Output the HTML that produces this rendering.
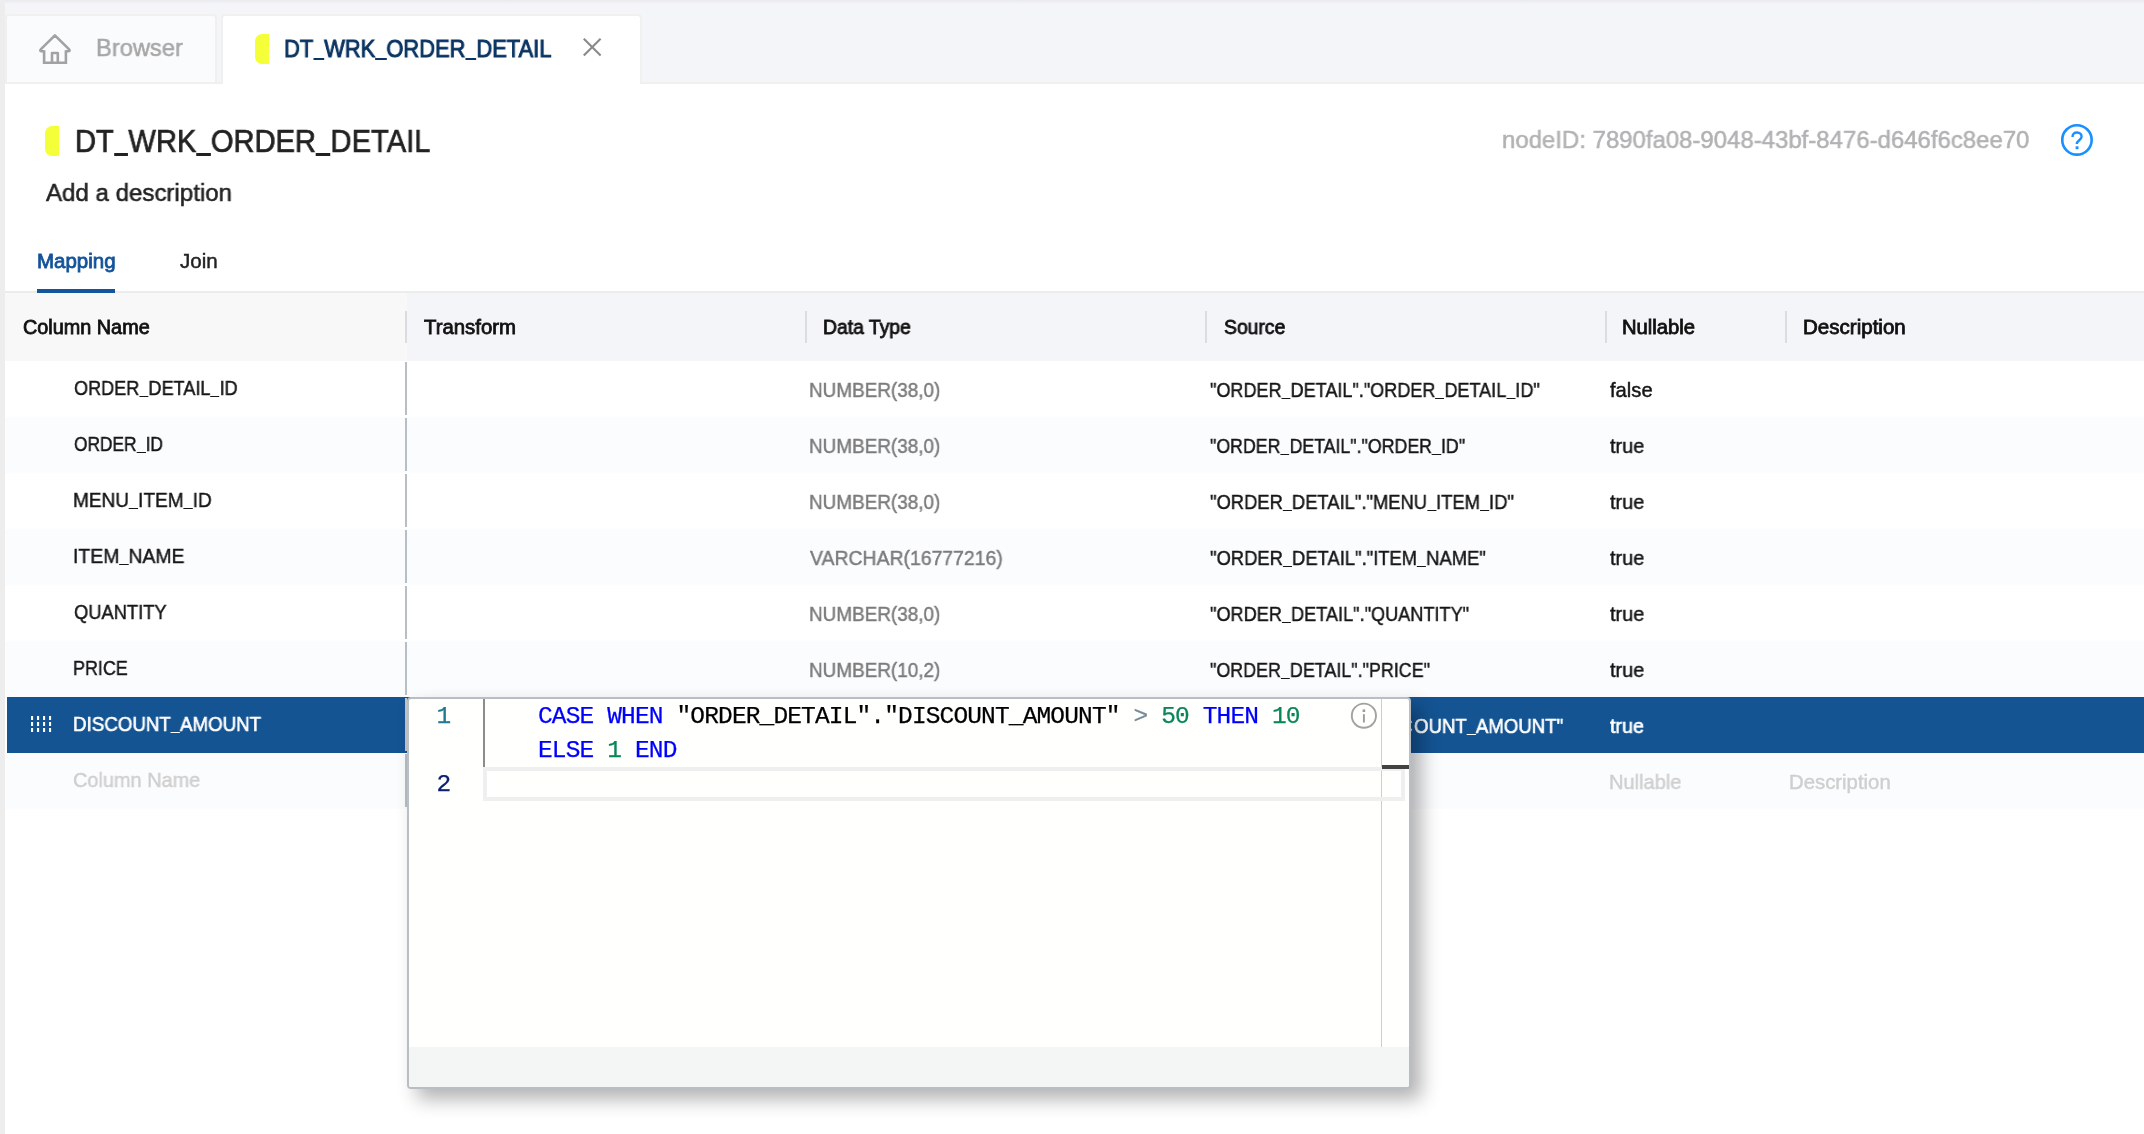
<!DOCTYPE html>
<html lang="en">
<head>
<meta charset="utf-8">
<title>DT_WRK_ORDER_DETAIL</title>
<style>
html,body{margin:0;padding:0;}
body{width:2144px;height:1134px;overflow:hidden;background:#ffffff;position:relative;font-family:"Liberation Sans",sans-serif;}
.a{position:absolute;}
.t{will-change:transform;-webkit-text-stroke:0.022em currentColor;position:absolute;white-space:pre;line-height:40px;height:40px;font-family:"Liberation Sans",sans-serif;transform:scaleX(var(--s));transform-origin:0 0;}
.md{-webkit-text-stroke:0.04em currentColor;}
.wh{-webkit-text-stroke:0.03em currentColor;}
.u{display:inline-block;width:calc(0.45em / var(--s));height:0.085em;line-height:0;overflow:hidden;font-style:normal;-webkit-text-fill-color:transparent;-webkit-text-stroke:0 transparent;background:currentColor;vertical-align:-0.12em;}
.md .u{height:0.11em;vertical-align:-0.135em;}
.m{will-change:transform;position:absolute;white-space:pre;font-family:"Liberation Mono",monospace;}
.sep{position:absolute;width:2px;top:311px;height:32px;background:#dadce1;}
.cb{position:absolute;left:405px;width:2px;height:53px;background:#b7bec5;}
.row{position:absolute;left:5px;width:2139px;height:56px;}
.k{color:#0000ff;}.n{color:#098658;}.o{color:#778899;}.i{color:#000000;}
</style>
</head>
<body>
<!-- chrome backgrounds -->
<div class="a" style="left:0;top:0;width:2144px;height:84px;background:#f4f5f9;"></div>
<div class="a" style="left:0;top:0;width:2144px;height:4px;background:linear-gradient(#e9e9ee,#f4f5f9);"></div>
<div class="a" style="left:0;top:84px;width:2144px;height:1050px;background:#ffffff;"></div>
<div class="a" style="left:5px;top:82px;width:2139px;height:2px;background:#f0f0ef;"></div>
<div class="a" style="box-sizing:border-box;left:5px;top:14px;width:212px;height:68px;background:#fafbfd;border:2px solid #f0f0ef;border-bottom:0;border-radius:4px 4px 0 0;"></div>
<div class="a" style="box-sizing:border-box;left:221px;top:14px;width:421px;height:70px;background:#ffffff;border:2px solid #f0f0ef;border-bottom:0;border-radius:4px 4px 0 0;"></div>

<!-- home icon -->
<svg class="a" style="left:36px;top:30px;" width="38" height="38" viewBox="0 0 38 38" fill="none" stroke="#a2a2a2" stroke-width="2.6">
<path d="M8.1 21.3 H5.9 Q3.2 21.1 5 19.2 L18.9 5.3 L32.9 19.2 Q34.7 21.1 32 21.3 H29.9" stroke-linejoin="round" stroke-linecap="butt"/>
<path d="M8.1 20.2 V32.8 H29.9 V20.2" stroke-linejoin="miter"/>
<path d="M16 32.8 V23 H21.8 V32.8" stroke-linejoin="round"/>
</svg>
<!-- tab chip + close -->
<div class="a" style="left:255px;top:34px;width:14px;height:30px;background:#f4ff3a;border-radius:7px 0 0 7px;"></div>
<svg class="a" style="left:581.7px;top:37px;" width="20" height="20" viewBox="0 0 20 20" fill="none" stroke="#8a8a8a" stroke-width="2.1"><path d="M1.8 1.8 L18.6 18.6 M18.6 1.8 L1.8 18.6"/></svg>

<!-- title chip -->
<div class="a" style="left:45px;top:126px;width:14px;height:30px;background:#f4ff3a;border-radius:7px 0 0 7px;"></div>
<!-- help icon -->
<svg class="a" style="left:2059px;top:122px;" width="36" height="36" viewBox="0 0 36 36" fill="none"><circle cx="17.95" cy="17.9" r="14.7" stroke="#1890ff" stroke-width="2.6"/>
<path d="M13.5 14.9 C13.5 12.1 15.4 10.5 18 10.5 C20.8 10.5 22.6 12.3 22.6 14.6 C22.6 18.2 17.8 18.4 17.8 22.1" stroke="#1890ff" stroke-width="2.4" fill="none"/><rect x="16.6" y="24.3" width="2.9" height="2.9" fill="#1890ff"/></svg>

<!-- subtabs line -->
<div class="a" style="left:5px;top:291px;width:2139px;height:2px;background:#ececec;"></div>
<div class="a" style="left:37px;top:289px;width:78px;height:4px;background:#13549b;"></div>

<!-- table header -->
<div class="a" style="left:5px;top:293px;width:402px;height:68px;background:#f8f8f8;"></div>
<div class="a" style="left:407px;top:293px;width:1737px;height:68px;background:#f4f5f9;"></div>
<div class="sep" style="left:405px;"></div>
<div class="sep" style="left:805px;"></div>
<div class="sep" style="left:1205px;"></div>
<div class="sep" style="left:1605px;"></div>
<div class="sep" style="left:1785px;"></div>

<!-- rows -->
<div class="row" style="top:361px;background:#ffffff;"></div>
<div class="row" style="top:417px;background:#fbfcfe;"></div>
<div class="row" style="top:473px;background:#ffffff;"></div>
<div class="row" style="top:529px;background:#fbfcfe;"></div>
<div class="row" style="top:585px;background:#ffffff;"></div>
<div class="row" style="top:641px;background:#fbfcfe;"></div>
<div class="row" style="top:697px;left:7px;width:2137px;background:#145493;"></div>
<div class="row" style="top:753px;background:#fbfcfe;"></div>
<div class="cb" style="top:362px;"></div>
<div class="cb" style="top:418px;"></div>
<div class="cb" style="top:474px;"></div>
<div class="cb" style="top:530px;"></div>
<div class="cb" style="top:586px;"></div>
<div class="cb" style="top:642px;"></div>
<div class="cb" style="top:698px;background:#c6c6c6;"></div>
<div class="cb" style="top:754px;"></div>

<!-- drag handle -->
<svg class="a" style="left:30px;top:715px;" width="24" height="20" viewBox="0 0 24 20" fill="#ffffff"><rect x="1" y="1" width="2.1" height="4"/><rect x="7" y="1" width="2.1" height="4"/><rect x="13" y="1" width="2.1" height="4"/><rect x="19" y="1" width="2.1" height="4"/><rect x="1" y="7" width="2.1" height="4"/><rect x="7" y="7" width="2.1" height="4"/><rect x="13" y="7" width="2.1" height="4"/><rect x="19" y="7" width="2.1" height="4"/><rect x="1" y="13" width="2.1" height="4"/><rect x="7" y="13" width="2.1" height="4"/><rect x="13" y="13" width="2.1" height="4"/><rect x="19" y="13" width="2.1" height="4"/></svg>

<!-- left strip -->
<div class="a" style="left:0;top:0;width:5px;height:1134px;background:#ededed;"></div>

<div class="t" style="left:95.79px;top:27.51px;font-size:24.2px;color:#a7a7a7;--s:0.9785;">Browser</div>
<div class="t md" style="left:284.30px;top:28.51px;font-size:24.5px;color:#0b3562;--s:0.8937;">DT<i class="u">_</i>WRK<i class="u">_</i>ORDER<i class="u">_</i>DETAIL</div>
<div class="t" style="left:75.13px;top:120.91px;font-size:32px;color:#222222;--s:0.9115;">DT<i class="u">_</i>WRK<i class="u">_</i>ORDER<i class="u">_</i>DETAIL</div>
<div class="t" style="left:45.77px;top:173.31px;font-size:24.8px;color:#222222;--s:0.9709;">Add a description</div>
<div class="t" style="left:1501.58px;top:119.61px;font-size:24.2px;color:#b2b2b4;--s:0.9903;">nodeID: 7890fa08-9048-43bf-8476-d646f6c8ee70</div>
<div class="t md" style="left:36.78px;top:241.07px;font-size:20px;color:#14539a;--s:1.0242;">Mapping</div>
<div class="t" style="left:179.72px;top:241.07px;font-size:20px;color:#222222;--s:1.0279;">Join</div>
<div class="t md" style="left:22.69px;top:307.27px;font-size:19.7px;color:#111111;--s:1.0067;">Column Name</div>
<div class="t md" style="left:423.89px;top:307.27px;font-size:19.7px;color:#111111;--s:1.0344;">Transform</div>
<div class="t md" style="left:823.11px;top:307.27px;font-size:19.7px;color:#111111;--s:0.9811;">Data Type</div>
<div class="t md" style="left:1223.69px;top:307.27px;font-size:19.7px;color:#111111;--s:0.9821;">Source</div>
<div class="t md" style="left:1622.47px;top:307.27px;font-size:19.7px;color:#111111;--s:1.0274;">Nullable</div>
<div class="t md" style="left:1802.75px;top:307.27px;font-size:19.7px;color:#111111;--s:1.0434;">Description</div>
<div class="t" style="left:73.72px;top:367.50px;font-size:20.2px;color:#161616;--s:0.8961;">ORDER<i class="u">_</i>DETAIL<i class="u">_</i>ID</div>
<div class="t" style="left:809.09px;top:369.80px;font-size:20.2px;color:#7b7b7b;--s:0.9362;">NUMBER(38,0)</div>
<div class="t" style="left:1210.02px;top:369.80px;font-size:20.2px;color:#161616;--s:0.8932;">"ORDER<i class="u">_</i>DETAIL"."ORDER<i class="u">_</i>DETAIL<i class="u">_</i>ID"</div>
<div class="t" style="left:1609.62px;top:369.80px;font-size:20.2px;color:#161616;--s:1.0010;">false</div>
<div class="t" style="left:73.72px;top:423.50px;font-size:20.2px;color:#161616;--s:0.8579;">ORDER<i class="u">_</i>ID</div>
<div class="t" style="left:809.09px;top:425.80px;font-size:20.2px;color:#7b7b7b;--s:0.9362;">NUMBER(38,0)</div>
<div class="t" style="left:1210.02px;top:425.80px;font-size:20.2px;color:#161616;--s:0.8793;">"ORDER<i class="u">_</i>DETAIL"."ORDER<i class="u">_</i>ID"</div>
<div class="t" style="left:1609.62px;top:425.80px;font-size:20.2px;color:#161616;--s:0.9883;">true</div>
<div class="t" style="left:72.78px;top:479.50px;font-size:20.2px;color:#161616;--s:0.9431;">MENU<i class="u">_</i>ITEM<i class="u">_</i>ID</div>
<div class="t" style="left:809.09px;top:481.80px;font-size:20.2px;color:#7b7b7b;--s:0.9362;">NUMBER(38,0)</div>
<div class="t" style="left:1210.02px;top:481.80px;font-size:20.2px;color:#161616;--s:0.9094;">"ORDER<i class="u">_</i>DETAIL"."MENU<i class="u">_</i>ITEM<i class="u">_</i>ID"</div>
<div class="t" style="left:1609.62px;top:481.80px;font-size:20.2px;color:#161616;--s:0.9883;">true</div>
<div class="t" style="left:72.76px;top:535.50px;font-size:20.2px;color:#161616;--s:0.9609;">ITEM<i class="u">_</i>NAME</div>
<div class="t" style="left:810.02px;top:537.80px;font-size:20.2px;color:#7b7b7b;--s:0.9615;">VARCHAR(16777216)</div>
<div class="t" style="left:1210.02px;top:537.80px;font-size:20.2px;color:#161616;--s:0.9107;">"ORDER<i class="u">_</i>DETAIL"."ITEM<i class="u">_</i>NAME"</div>
<div class="t" style="left:1609.62px;top:537.80px;font-size:20.2px;color:#161616;--s:0.9883;">true</div>
<div class="t" style="left:73.72px;top:591.50px;font-size:20.2px;color:#161616;--s:0.9080;">QUANTITY</div>
<div class="t" style="left:809.09px;top:593.80px;font-size:20.2px;color:#7b7b7b;--s:0.9362;">NUMBER(38,0)</div>
<div class="t" style="left:1210.02px;top:593.80px;font-size:20.2px;color:#161616;--s:0.8980;">"ORDER<i class="u">_</i>DETAIL"."QUANTITY"</div>
<div class="t" style="left:1609.62px;top:593.80px;font-size:20.2px;color:#161616;--s:0.9883;">true</div>
<div class="t" style="left:72.83px;top:647.50px;font-size:20.2px;color:#161616;--s:0.8875;">PRICE</div>
<div class="t" style="left:809.09px;top:649.80px;font-size:20.2px;color:#7b7b7b;--s:0.9362;">NUMBER(10,2)</div>
<div class="t" style="left:1210.02px;top:649.80px;font-size:20.2px;color:#161616;--s:0.8856;">"ORDER<i class="u">_</i>DETAIL"."PRICE"</div>
<div class="t" style="left:1609.62px;top:649.80px;font-size:20.2px;color:#161616;--s:0.9883;">true</div>
<div class="t wh" style="left:72.87px;top:703.50px;font-size:20.2px;color:#ffffff;--s:0.9282;">DISCOUNT<i class="u">_</i>AMOUNT</div>
<div class="t wh" style="left:1210.10px;top:705.80px;font-size:20.2px;color:#ffffff;--s:0.8840;">"ORDER<i class="u">_</i>DETAIL"."DIS</div>
<div class="t wh" style="left:1399.27px;top:705.80px;font-size:20.2px;color:#ffffff;--s:0.9303;">C</div>
<div class="t wh" style="left:1413.70px;top:705.80px;font-size:20.2px;color:#ffffff;--s:0.9231;">OUNT<i class="u">_</i>AMOUNT"</div>
<div class="t wh" style="left:1609.70px;top:705.80px;font-size:20.2px;color:#ffffff;--s:0.9779;">true</div>
<div class="t" style="left:72.74px;top:759.50px;font-size:20.2px;color:#cfcfcf;--s:0.9864;">Column Name</div>
<div class="t" style="left:1608.63px;top:761.80px;font-size:20.2px;color:#cfcfcf;--s:0.9922;">Nullable</div>
<div class="t" style="left:1788.52px;top:761.80px;font-size:20.2px;color:#cfcfcf;--s:1.0071;">Description</div>

<!-- editor popup -->
<div class="a" style="box-sizing:border-box;left:407px;top:697px;width:1004px;height:392px;background:#fffffe;border:2px solid #b8bec4;border-radius:4px;box-shadow:10px 10px 19px rgba(0,0,0,0.31);"></div>
<div class="a" style="left:409px;top:1047px;width:1000px;height:40px;background:#f4f6f6;border-radius:0 0 2px 2px;"></div>
<div class="a" style="left:1381px;top:699px;width:1px;height:348px;background:#cdcdcd;"></div>
<div class="a" style="box-sizing:border-box;left:483px;top:767px;width:922px;height:34px;border:4px solid #efefef;"></div>
<div class="a" style="left:1382px;top:765px;width:27px;height:4px;background:#424242;"></div>
<div class="a" style="left:483px;top:699px;width:2px;height:68px;background:#8c8c8c;"></div>
<svg class="a" style="left:1349px;top:701px;" width="30" height="30" viewBox="0 0 30 30" fill="none"><circle cx="14.9" cy="14.7" r="12.1" stroke="#a2a2a2" stroke-width="1.9"/><rect x="13.95" y="13.2" width="1.9" height="8.3" fill="#9c9c9c"/><rect x="13.6" y="8.4" width="2.6" height="2.6" fill="#9c9c9c"/></svg>
<div class="m" style="left:420px;top:700px;width:31.2px;text-align:right;font-size:24.5px;line-height:33.8px;color:#237893;-webkit-text-stroke:0.25px currentColor;">1</div>
<div class="m" style="left:420px;top:767.8px;width:31.2px;text-align:right;font-size:24.5px;line-height:33.8px;color:#0b216f;-webkit-text-stroke:0.25px currentColor;">2</div>
<div class="m" style="left:538.4px;top:700.3px;font-size:24.5px;line-height:33.8px;letter-spacing:-0.856px;-webkit-text-stroke:0.25px currentColor;"><span class="k">CASE</span> <span class="k">WHEN</span> <span class="i">"ORDER_DETAIL"."DISCOUNT_AMOUNT"</span> <span class="o">&gt;</span> <span class="n">50</span> <span class="k">THEN</span> <span class="n">10</span>
<span class="k">ELSE</span> <span class="n">1</span> <span class="k">END</span></div>
</body>
</html>
